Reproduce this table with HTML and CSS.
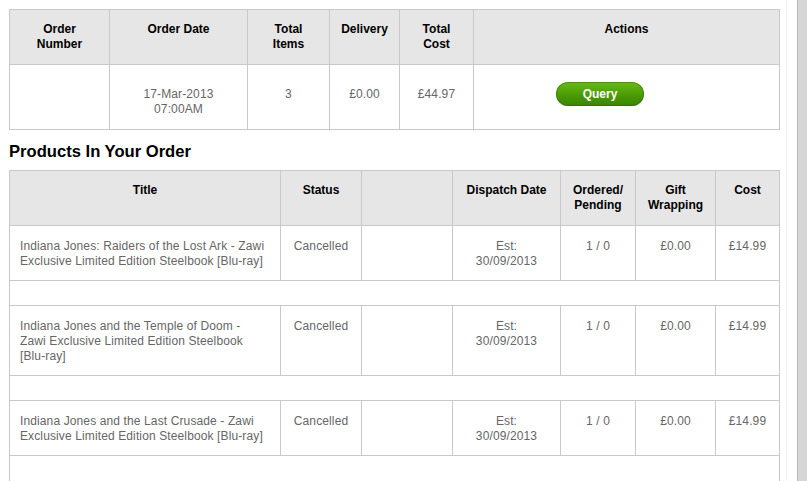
FILE: index.html
```html
<!DOCTYPE html>
<html>
<head>
<meta charset="utf-8">
<link rel="stylesheet" href="styles.css">
</head>
<body>
<div class="page">
  <main class="main">
    <table class="grid order">
      <colgroup>
        <col style="width:100px"><col style="width:138px"><col style="width:82px"><col style="width:70px"><col style="width:74px"><col style="width:306px">
      </colgroup>
      <thead>
        <tr>
          <th>Order<br>Number</th>
          <th>Order Date</th>
          <th>Total<br>Items</th>
          <th>Delivery</th>
          <th>Total<br>Cost</th>
          <th>Actions</th>
        </tr>
      </thead>
      <tbody>
        <tr>
          <td></td>
          <td>17-Mar-2013<br>07:00AM</td>
          <td>3</td>
          <td>£0.00</td>
          <td>£44.97</td>
          <td class="actions"><a class="btn">Query</a></td>
        </tr>
      </tbody>
    </table>

    <h2 class="heading">Products In Your Order</h2>

    <table class="grid products">
      <colgroup>
        <col style="width:271px"><col style="width:81px"><col style="width:91px"><col style="width:108px"><col style="width:75px"><col style="width:80px"><col style="width:64px">
      </colgroup>
      <thead>
        <tr>
          <th>Title</th>
          <th>Status</th>
          <th></th>
          <th>Dispatch Date</th>
          <th>Ordered/<br>Pending</th>
          <th>Gift<br>Wrapping</th>
          <th>Cost</th>
        </tr>
      </thead>
      <tbody>
        <tr>
          <td class="title">Indiana Jones: Raiders of the Lost Ark - Zawi Exclusive Limited Edition Steelbook [Blu-ray]</td>
          <td>Cancelled</td>
          <td></td>
          <td>Est:<br>30/09/2013</td>
          <td>1 / 0</td>
          <td>£0.00</td>
          <td>£14.99</td>
        </tr>
        <tr class="spacer"><td colspan="7"></td></tr>
        <tr>
          <td class="title">Indiana Jones and the Temple of Doom -<br>Zawi Exclusive Limited Edition Steelbook<br>[Blu-ray]</td>
          <td>Cancelled</td>
          <td></td>
          <td>Est:<br>30/09/2013</td>
          <td>1 / 0</td>
          <td>£0.00</td>
          <td>£14.99</td>
        </tr>
        <tr class="spacer"><td colspan="7"></td></tr>
        <tr>
          <td class="title">Indiana Jones and the Last Crusade - Zawi Exclusive Limited Edition Steelbook [Blu-ray]</td>
          <td>Cancelled</td>
          <td></td>
          <td>Est:<br>30/09/2013</td>
          <td>1 / 0</td>
          <td>£0.00</td>
          <td>£14.99</td>
        </tr>
        <tr class="spacer tail"><td colspan="7"></td></tr>
      </tbody>
    </table>
  </main>
  <div class="edge"><div class="edge-bar"></div></div>
</div>
</body>
</html>
```

FILE: styles.css
```css
html, body {
  margin: 0;
  padding: 0;
  background: #fff;
  height: 100%;
  overflow: hidden;
}

body {
  font-family: "Liberation Sans", Arial, sans-serif;
  font-size: 12px;
  line-height: 15px;
  color: #666;
}

.page {
  display: flex;
  height: 100vh;
}

.main {
  width: 777px;
  padding: 9px 0 0 9px;
  border-right: 1px solid #f0f0f0;
  flex: none;
}

.edge {
  flex: 1;
  padding-left: 10px;
  display: flex;
}

.edge-bar {
  flex: 1;
  background: #d6d6d6;
  border-left: 1px solid #b9b9b9;
}

.grid {
  border-collapse: collapse;
  table-layout: fixed;
  width: 770px;
}

.grid th,
.grid td {
  border: 1px solid #c9c9c9;
  padding: 12px 6px;
  text-align: center;
  vertical-align: top;
}

.grid th {
  background: #e6e6e6;
  color: #000;
  font-weight: bold;
}

.grid td {
  letter-spacing: 0.12px;
}

.order td {
  padding-top: 22px;
}

.order td.actions {
  text-align: left;
  padding-left: 82px;
}

.btn {
  display: inline-block;
  width: 88px;
  height: 24px;
  margin-top: -5px;
  border-radius: 12px;
  background: linear-gradient(#67bb14, #4a9b06 55%, #3b8400);
  box-shadow: inset 0 0 0 1px rgba(40, 100, 0, 0.45);
  color: #fff;
  font-weight: bold;
  letter-spacing: 0;
  line-height: 24px;
  text-align: center;
  cursor: pointer;
}

.heading {
  margin: 12px 0 8px;
  font-size: 16.6px;
  line-height: 20px;
  font-weight: bold;
  color: #000;
}

.products td {
  padding-top: 13px;
  padding-bottom: 11px;
}

.products td.title {
  text-align: left;
  padding-left: 10px;
  padding-right: 2px;
}

.products .spacer td {
  height: 24px;
  padding: 0;
}

.products .tail td {
  height: 40px;
  border-bottom: none;
}
```
